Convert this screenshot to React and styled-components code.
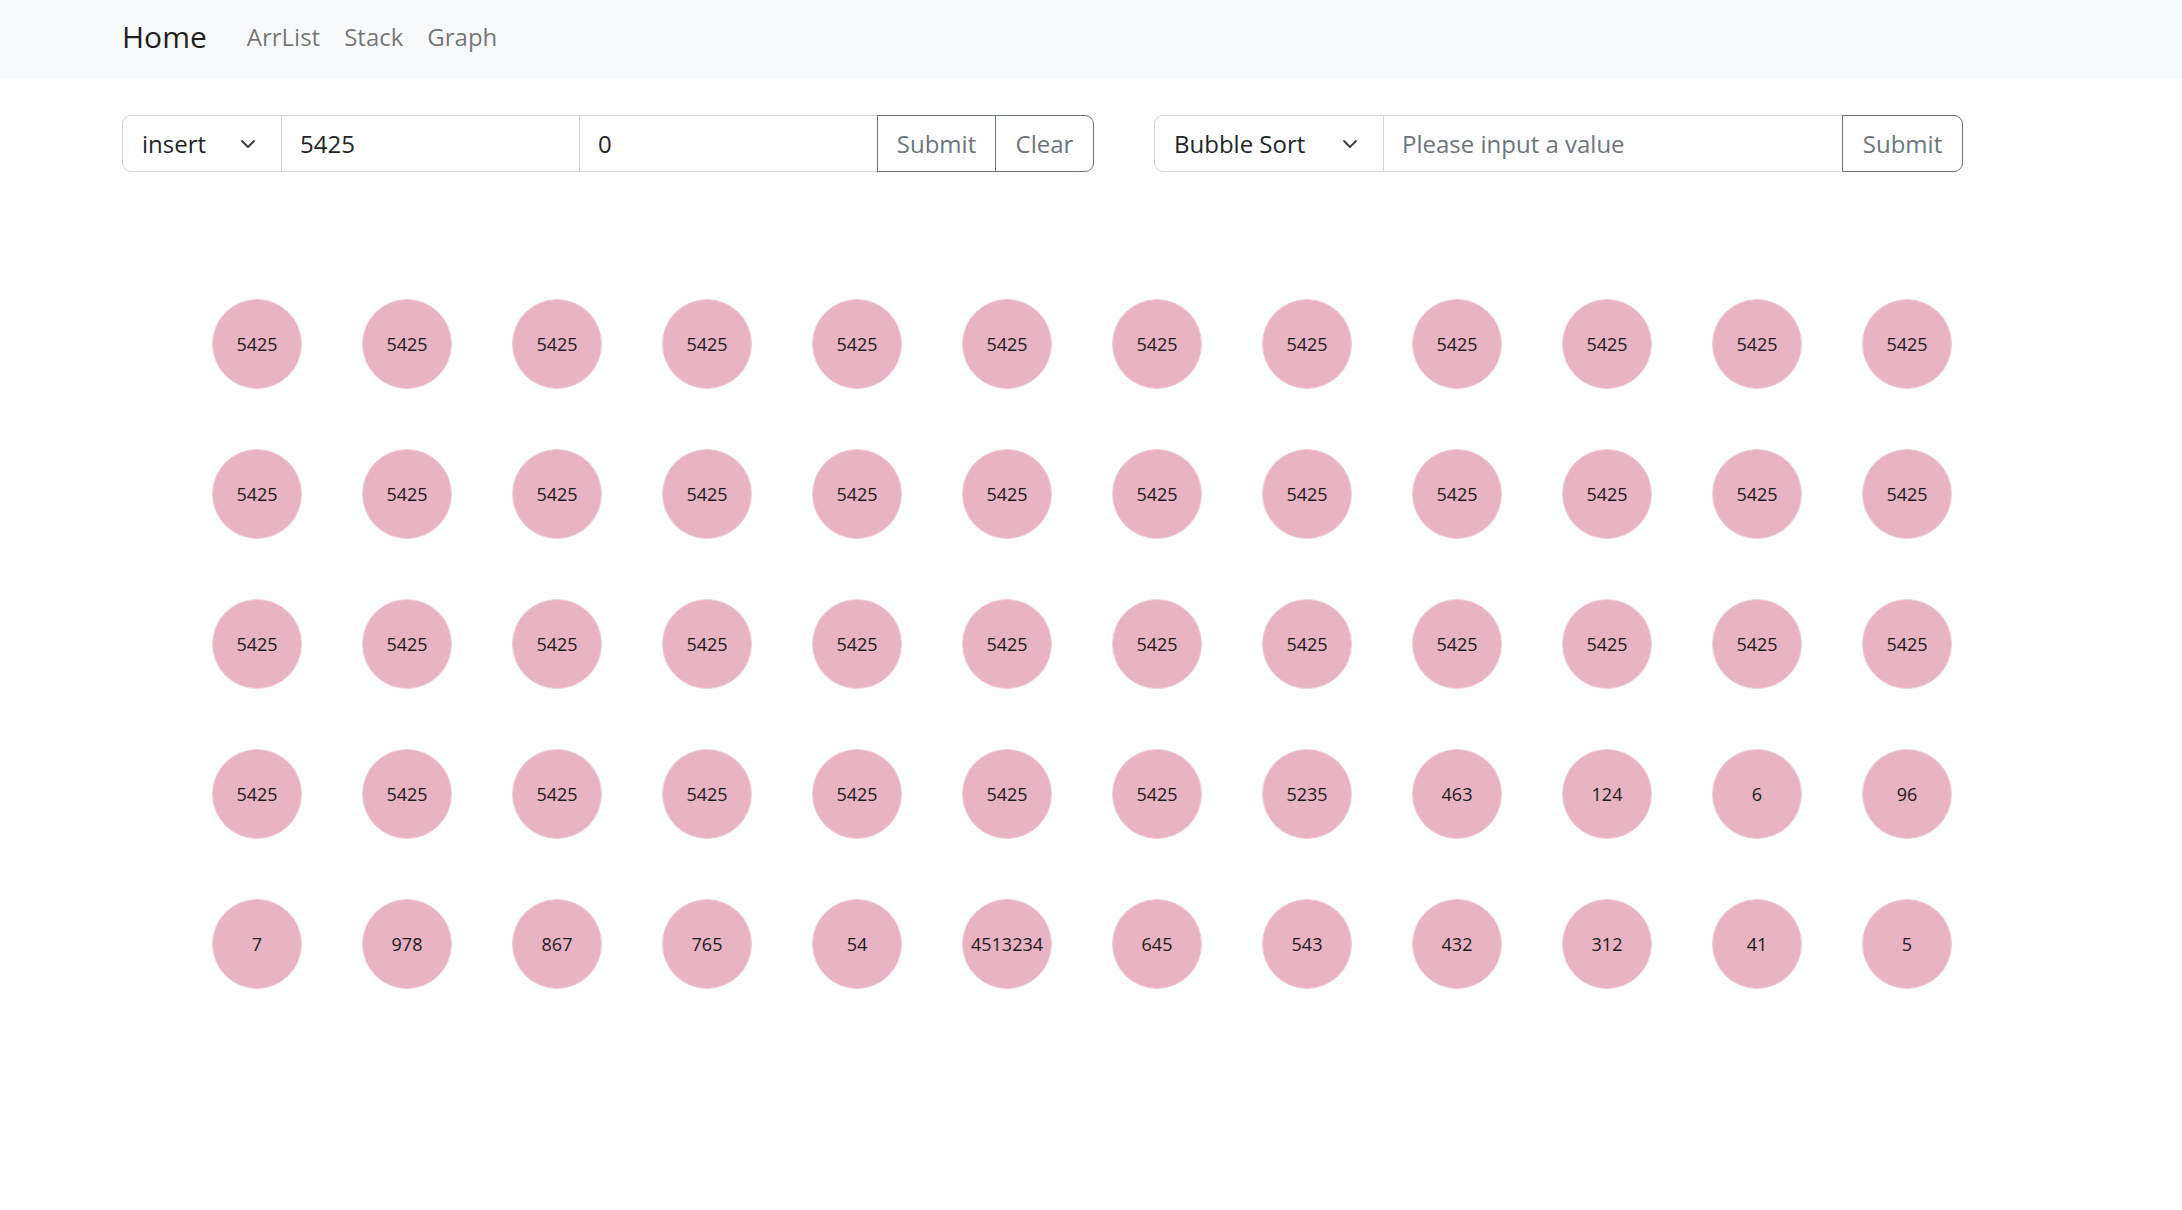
import React from 'react';
import styled, { createGlobalStyle } from 'styled-components';

const GlobalStyle = createGlobalStyle`
  * { box-sizing: border-box; }
  body {
    margin: 0;
    background: #fff;
    font-family: "Open Sans", "Noto Sans", sans-serif;
    color: #212529;
  }
`;

const Navbar = styled.nav`
  height: 79px;
  background: #f8f9fa;
  display: flex;
  align-items: center;
  padding: 0 0 6px 122px;
`;

const Brand = styled.a`
  font-size: 30px;
  line-height: 45px;
  color: rgba(0, 0, 0, 0.9);
  margin-right: 28px;
  text-decoration: none;
`;

const NavLink = styled.a`
  font-size: 24px;
  line-height: 36px;
  padding: 0 12px;
  color: rgba(0, 0, 0, 0.55);
  text-decoration: none;
`;

const Toolbar = styled.div`
  display: flex;
  gap: 60px;
  padding: 36px 0 0 122px;
`;

const InputGroup = styled.div`
  display: flex;
  height: 57px;
`;

const SelectBox = styled.div`
  width: ${(p) => p.$w}px;
  height: 100%;
  border: 1px solid #ced4da;
  border-radius: 9px 0 0 9px;
  display: flex;
  align-items: center;
  justify-content: space-between;
  padding: 0 25px 0 19px;
  font-size: 24px;
  color: #212529;
  background: #fff;
`;

const Field = styled.input`
  width: ${(p) => p.$w}px;
  height: 100%;
  margin-left: -1px;
  border: 1px solid #ced4da;
  border-radius: 0;
  padding: 0 18px;
  font-family: inherit;
  font-size: 24px;
  color: #212529;
  background: #fff;
  outline: none;
  &::placeholder {
    color: #6c757d;
  }
`;

const OutlineButton = styled.button`
  width: ${(p) => p.$w}px;
  height: 100%;
  margin-left: -1px;
  border: 1px solid #6c757d;
  border-radius: ${(p) => (p.$last ? '0 9px 9px 0' : '0')};
  background: transparent;
  color: #6c757d;
  font-family: inherit;
  font-size: 24px;
  padding: 0;
  position: relative;
`;

const Board = styled.div`
  display: grid;
  grid-template-columns: repeat(12, 150px);
  margin: 97px 0 0 182px;
`;

const Node = styled.div`
  width: 90px;
  height: 90px;
  margin: 30px;
  border-radius: 50%;
  background: #e8b3c3;
  border: 1px solid #f1cfd9;
  display: flex;
  align-items: center;
  justify-content: center;
  font-size: 18px;
  color: #1f1a1c;
`;

const Chevron = () => (
  <svg width="16" height="16" viewBox="0 0 16 16" fill="none">
    <path d="m2 5 6 6 6-6" stroke="#343a40" strokeWidth="1.8" strokeLinecap="round" strokeLinejoin="round" />
  </svg>
);

const values = [
  ...Array(36).fill('5425'),
  '5425', '5425', '5425', '5425', '5425', '5425', '5425', '5235', '463', '124', '6', '96',
  '7', '978', '867', '765', '54', '4513234', '645', '543', '432', '312', '41', '5',
];

export default function App() {
  return (
    <>
      <GlobalStyle />
      <Navbar>
        <Brand href="#">Home</Brand>
        <NavLink href="#">ArrList</NavLink>
        <NavLink href="#">Stack</NavLink>
        <NavLink href="#">Graph</NavLink>
      </Navbar>
      <Toolbar>
        <InputGroup>
          <SelectBox $w={160}>
            <span>insert</span>
            <Chevron />
          </SelectBox>
          <Field $w={299} defaultValue="5425" />
          <Field $w={299} defaultValue="0" />
          <OutlineButton $w={119}>Submit</OutlineButton>
          <OutlineButton $w={99} $last>Clear</OutlineButton>
        </InputGroup>
        <InputGroup>
          <SelectBox $w={230}>
            <span>Bubble Sort</span>
            <Chevron />
          </SelectBox>
          <Field $w={460} placeholder="Please input a value" />
          <OutlineButton $w={121} $last>Submit</OutlineButton>
        </InputGroup>
      </Toolbar>
      <Board>
        {values.map((v, i) => (
          <Node key={i}>{v}</Node>
        ))}
      </Board>
    </>
  );
}
